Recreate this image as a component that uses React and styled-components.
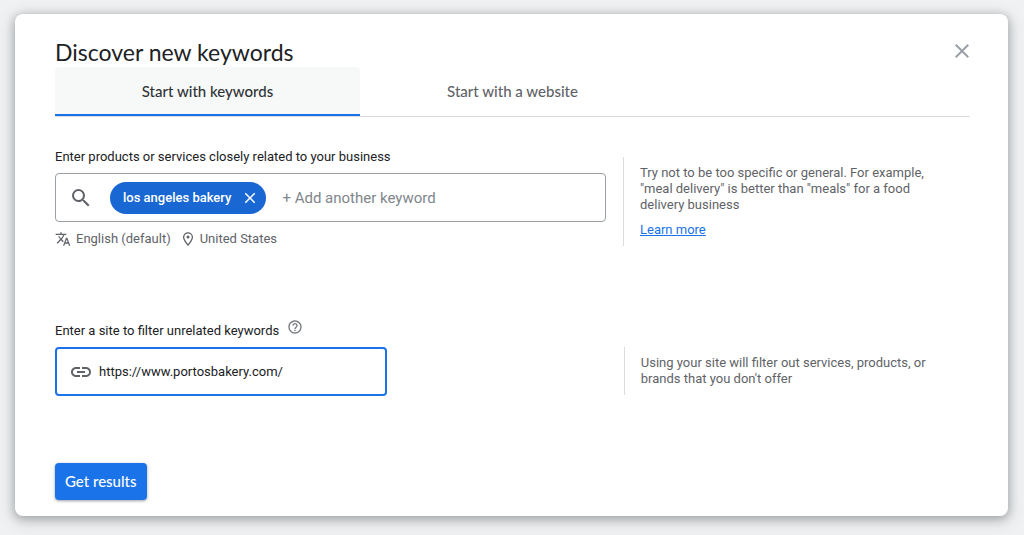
import React, { useState } from 'react';
import styled, { createGlobalStyle } from 'styled-components';
import {
  MdClose,
  MdHelpOutline,
  MdLink,
  MdSearch,
  MdTranslate,
} from 'react-icons/md';

const brandFont = '"Lato", "Open Sans", sans-serif';

const GlobalStyle = createGlobalStyle`
  *, *::before, *::after { box-sizing: border-box; }
  body {
    margin: 0;
    background: #eff1f2;
    color: #202124;
    font: 13px/20px Roboto, sans-serif;
  }
  button, input { font: inherit; }
`;

const Page = styled.div`
  padding: 14px 16px 19px 15px;
`;

const Card = styled.main`
  padding: 24px 38px 16px 40px;
  background: #fff;
  border-radius: 8px;
  box-shadow: 0 2px 8px 1px rgba(60, 64, 67, 0.32), 0 4px 16px 2px rgba(60, 64, 67, 0.16);
`;

const Header = styled.header`
  display: flex;
  justify-content: space-between;
  align-items: flex-start;
  height: 29px;
`;

const Title = styled.h1`
  margin: 0;
  font: 400 23px/28px ${brandFont};
`;

const IconButton = styled.button`
  display: flex;
  padding: 0;
  border: 0;
  background: none;
  color: inherit;
  cursor: pointer;
`;

const CloseButton = styled(IconButton)`
  margin-top: 1px;
  margin-right: -4px;
  color: #9aa0a6;
`;

const Tabs = styled.div`
  display: grid;
  grid-template-columns: repeat(3, 1fr);
  border-bottom: 1px solid #dadce0;
`;

const Tab = styled.button`
  height: 49px;
  padding: 0;
  border: 0;
  border-bottom: 2px solid ${({ $active }) => ($active ? '#1a73e8' : 'transparent')};
  border-radius: 4px 4px 0 0;
  background: ${({ $active }) => ($active ? '#f7f9f9' : 'transparent')};
  color: ${({ $active }) => ($active ? '#303336' : '#5f6368')};
  font: 500 15px/20px ${brandFont};
  cursor: pointer;
`;

const Section = styled.section`
  display: grid;
  grid-template-columns: 551fr 347fr;
  column-gap: ${({ $gap }) => $gap}px;
  margin-top: ${({ $top }) => $top}px;
`;

const LabelRow = styled.div`
  display: flex;
  align-items: center;
  gap: 8px;
  height: 20px;
  margin-bottom: 6px;
`;

const HelpButton = styled(IconButton)`
  align-self: flex-start;
  margin-top: -2px;
  color: #757a7f;
`;

const Field = styled.div`
  display: flex;
  align-items: center;
  height: 49px;
  border: 1px solid #9aa0a6;
  border-radius: 4px;
  padding: 0 13px;
  color: #5f6368;
`;

const UrlField = styled(Field)`
  width: 332px;
  max-width: 100%;
  border: 2px solid #1a73e8;
  padding: 0 12px;
  gap: 6px;
`;

const TextInput = styled.input`
  flex: 1;
  min-width: 0;
  padding: 0;
  border: 0;
  outline: 0;
  background: none;
  color: #202124;
  &::placeholder { color: #80868b; opacity: 1; }
`;

const KeywordInput = styled(TextInput)`
  font-size: 15px;
`;

const Chip = styled.span`
  display: flex;
  align-items: center;
  gap: 10px;
  height: 32px;
  margin: 0 16px 0 17px;
  padding: 0 7px 0 13px;
  border-radius: 16px;
  background: #1967d2;
  color: #fff;
  font-weight: 500;
  white-space: nowrap;
`;

const Meta = styled.div`
  display: flex;
  align-items: center;
  gap: 10px;
  margin-top: 7px;
  color: #5f6368;
`;

const MetaItem = styled.span`
  display: flex;
  align-items: center;
  gap: 5px;
`;

const Hint = styled.aside`
  align-self: start;
  margin-top: ${({ $top }) => $top}px;
  border-left: 1px solid #dadce0;
  padding: 8px 32px 8px 16px;
  color: #5f6368;
  line-height: 16px;
`;

const HintText = styled.p`
  margin: 0;
`;

const LearnMore = styled.a`
  display: block;
  width: fit-content;
  margin-top: 9px;
  color: #1a73e8;
`;

const SubmitButton = styled.button`
  display: block;
  height: 37px;
  margin-top: 67px;
  padding: 0 10px 2px;
  border: 0;
  border-radius: 4px;
  background: #1a73e8;
  color: #fff;
  font: 500 15px/20px ${brandFont};
  box-shadow: 0 1px 3px rgba(60, 64, 67, 0.5);
  cursor: pointer;
`;

function PinIcon() {
  return (
    <svg width="14" height="16" viewBox="0 0 14 16" fill="none" aria-hidden="true">
      <path
        d="M7 14.2C4.6 11.2 2.6 8.6 2.6 6.2a4.4 4.4 0 0 1 8.8 0C11.4 8.600 9.400 11.200 7 14.200Z"
        stroke="currentColor"
        strokeWidth="1.3"
        strokeLinejoin="round"
      />
      <circle cx="7" cy="6.100" r="1.500" fill="currentColor" />
    </svg>
  );
}

export default function App() {
  const [tab, setTab] = useState('keywords');
  const [keyword, setKeyword] = useState('');
  const [url, setUrl] = useState('https://www.portosbakery.com/');

  return (
    <Page>
      <GlobalStyle />
      <Card>
        <Header>
          <Title>Discover new keywords</Title>
          <CloseButton type="button" aria-label="Close">
            <MdClose size={24} />
          </CloseButton>
        </Header>
        <Tabs role="tablist">
          <Tab type="button" role="tab" aria-selected={tab === 'keywords'} $active={tab === 'keywords'} onClick={() => setTab('keywords')}>
            Start with keywords
          </Tab>
          <Tab type="button" role="tab" aria-selected={tab === 'website'} $active={tab === 'website'} onClick={() => setTab('website')}>
            Start with a website
          </Tab>
        </Tabs>

        <Section $gap={17} $top={30}>
          <div>
            <LabelRow>
              <label htmlFor="keywords">Enter products or services closely related to your business</label>
            </LabelRow>
            <Field>
              <MdSearch size={24} />
              <Chip>
                los angeles bakery
                <IconButton type="button" aria-label="Remove los angeles bakery">
                  <MdClose size={18} />
                </IconButton>
              </Chip>
              <KeywordInput
                id="keywords"
                placeholder="+ Add another keyword"
                value={keyword}
                onChange={(e) => setKeyword(e.target.value)}
              />
            </Field>
            <Meta>
              <MetaItem>
                <MdTranslate size={16} />
                English (default)
              </MetaItem>
              <MetaItem>
                <PinIcon />
                United States
              </MetaItem>
            </Meta>
          </div>
          <Hint $top={10}>
            <HintText>
              Try not to be too specific or general. For example, "meal delivery" is better than "meals" for a food delivery business
            </HintText>
            <LearnMore href="#learn-more">Learn more</LearnMore>
          </Hint>
        </Section>

        <Section $gap={19} $top={72}>
          <div>
            <LabelRow>
              <label htmlFor="site">Enter a site to filter unrelated keywords</label>
              <HelpButton type="button" aria-label="Help">
                <MdHelpOutline size={16} />
              </HelpButton>
            </LabelRow>
            <UrlField>
              <MdLink size={24} />
              <TextInput id="site" type="url" value={url} onChange={(e) => setUrl(e.target.value)} />
            </UrlField>
          </div>
          <Hint $top={26}>
            <HintText>Using your site will filter out services, products, or brands that you don't offer</HintText>
          </Hint>
        </Section>

        <SubmitButton type="button">Get results</SubmitButton>
      </Card>
    </Page>
  );
}
